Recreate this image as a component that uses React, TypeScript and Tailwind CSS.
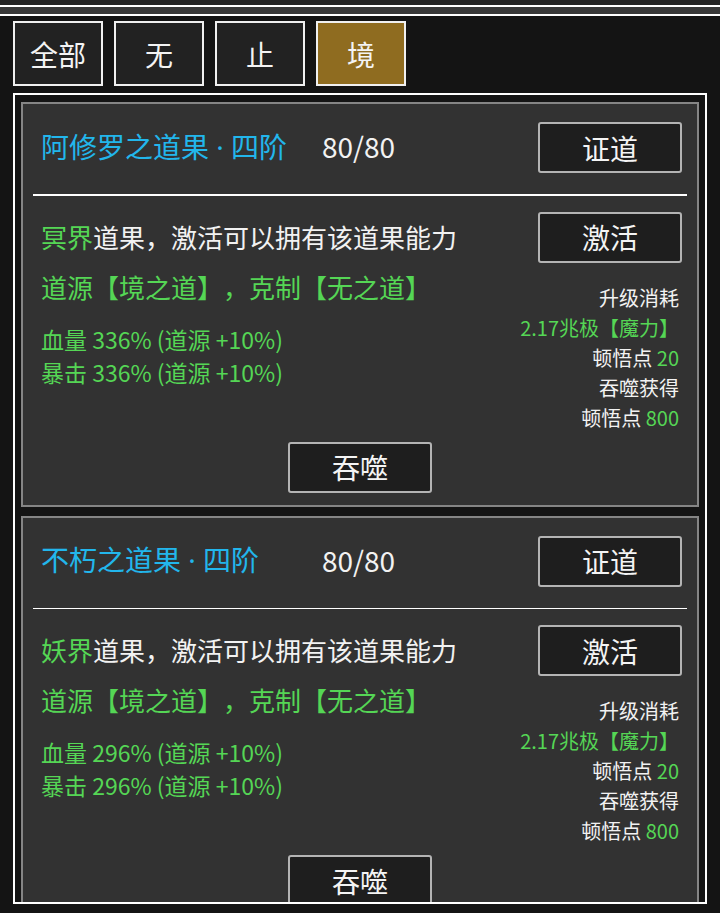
import React from 'react';

const tabs = ['全部', '无', '止', '境'];

const fruits = [
  { name: '阿修罗之道果', rank: '四阶', realm: '冥界', hp: '336%', crit: '336%' },
  { name: '不朽之道果', rank: '四阶', realm: '妖界', hp: '296%', crit: '296%' },
];

const Btn: React.FC<{ label: string }> = ({ label }) => (
  <button className="w-[144px] h-[51px] bg-[#1e1e1e] border-2 border-[#b4b4b4] rounded-[3px] text-[28px] leading-none text-[#f4f4f4]">
    {label}
  </button>
);

interface FruitProps {
  name: string;
  rank: string;
  realm: string;
  hp: string;
  crit: string;
}

const FruitCard: React.FC<FruitProps> = ({ name, rank, realm, hp, crit }) => (
  <div className="shrink-0 bg-[#323232] border-2 border-[#858585]">
    <div className="flex items-center justify-between pl-[18px] pr-[15px] pt-[18px] pb-[21px]">
      <div className="flex items-center text-[28px] -mt-[3px]">
        <span className="w-[281px] text-[#22b6ec]">
          {name}
          <span className="inline-block w-[22px] text-center font-['Noto_Sans']">·</span>
          {rank}
        </span>
        <span className="text-[#f2f2f2]">80/80</span>
      </div>
      <Btn label="证道" />
    </div>
    <div className="mx-[10px] h-[1.5px] bg-white" />
    <div className="flex justify-between pl-[18px] pr-[15px] pt-[16px]">
      <div>
        <div className="text-[26px] leading-[50px] text-[#f2f2f2]">
          <span className="text-[#55d655]">{realm}</span>道果，激活可以拥有该道果能力
        </div>
        <div className="text-[26px] leading-[50px] text-[#55d655]">道源【境之道】，克制【无之道】</div>
        <div className="mt-[11px] text-[23px] leading-[33px] text-[#55d655]">
          <div>血量 {hp} (道源 +10%)</div>
          <div>暴击 {crit} (道源 +10%)</div>
        </div>
      </div>
      <div className="flex flex-col items-end">
        <Btn label="激活" />
        <div className="mt-[20px] pr-[3px] text-right text-[20px] leading-[30px] text-[#f2f2f2]">
          <div>升级消耗</div>
          <div className="text-[#55d655]">2.17兆极【魔力】</div>
          <div>
            顿悟点 <span className="text-[#55d655]">20</span>
          </div>
          <div>吞噬获得</div>
          <div>
            顿悟点 <span className="text-[#55d655]">800</span>
          </div>
        </div>
      </div>
    </div>
    <div className="flex justify-center pt-[9px] pb-[12px]">
      <Btn label="吞噬" />
    </div>
  </div>
);

export default function App() {
  return (
    <div
      className="w-[720px] h-[913px] overflow-hidden bg-[#141414] [text-spacing-trim:space-all]"
      style={{ fontFamily: '"Noto Sans CJK SC", "Noto Sans", sans-serif' }}
    >
      <div className="h-[5px] bg-[#242424]" />
      <div className="h-[2px] bg-white" />
      <div className="h-[7px] bg-[#383838]" />
      <div className="h-[2px] bg-white" />
      <div className="flex gap-[11px] px-[13px] pt-[5px]">
        {tabs.map((t, i) => (
          <div
            key={t}
            className={`w-[90px] h-[65px] flex items-center justify-center border-2 border-[#f0f0f0] text-[28px] text-[#f4f4f4] ${
              i === 3 ? 'bg-[#8f6c20]' : 'bg-[#222222]'
            }`}
          >
            {t}
          </div>
        ))}
      </div>
      <div className="mx-[13px] mt-[7px] h-[811px] border-2 border-white overflow-hidden">
        <div className="flex flex-col gap-[9px] px-[6px] pt-[7px]">
          {fruits.map((f) => (
            <FruitCard key={f.name} {...f} />
          ))}
        </div>
      </div>
    </div>
  );
}
